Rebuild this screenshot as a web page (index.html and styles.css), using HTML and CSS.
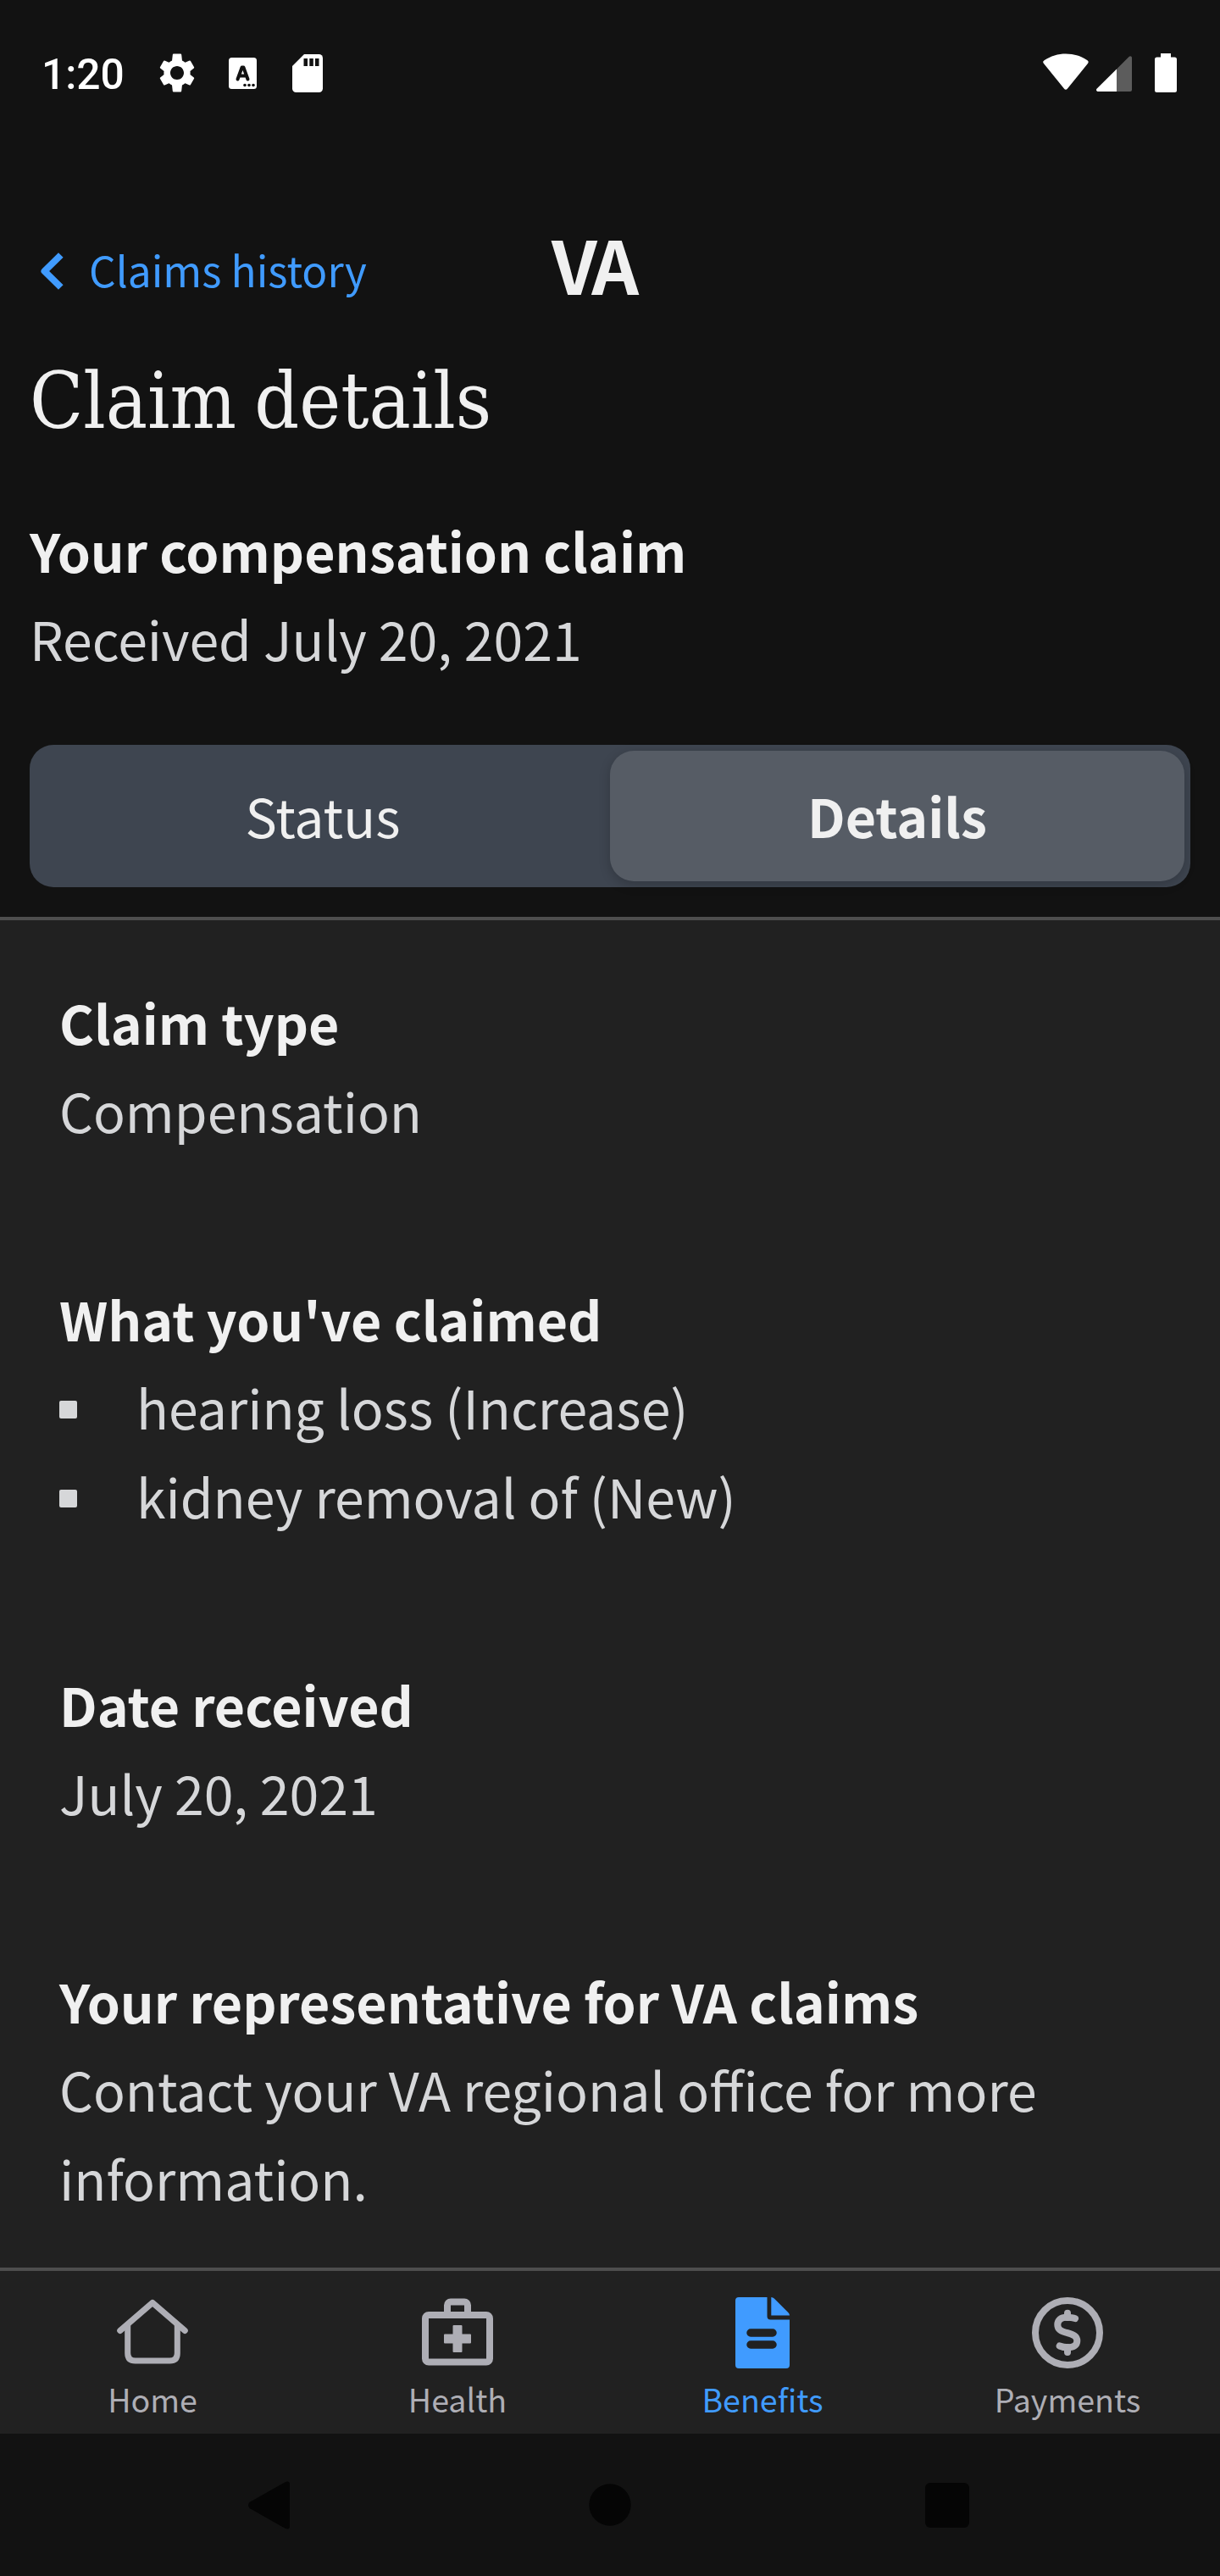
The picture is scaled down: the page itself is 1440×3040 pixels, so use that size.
FILE: index.html
```html
<!DOCTYPE html>
<html lang="en">
<head>
<meta charset="utf-8">
<title>Claim details</title>
<link rel="stylesheet" href="styles.css">
</head>
<body>
<div class="status-bar">
  <span class="clock">1:20</span>
  <svg class="st-gear" width="52" height="52" viewBox="0 0 24 24"><path fill="#fff" d="M19.14 12.94c.04-.3.06-.61.06-.94 0-.32-.02-.64-.07-.94l2.03-1.58c.18-.14.23-.41.12-.61l-1.92-3.32c-.12-.22-.37-.29-.59-.22l-2.39.96c-.5-.38-1.03-.7-1.62-.94L14.4 2.05c-.04-.24-.24-.41-.48-.41h-3.84c-.24 0-.43.17-.47.41l-.36 3.3c-.59.24-1.13.57-1.62.94l-2.39-.96c-.22-.08-.47 0-.59.22L2.74 8.87c-.12.21-.08.47.12.61l2.03 1.58c-.05.3-.09.63-.09.94s.02.64.07.94l-2.03 1.58c-.18.14-.23.41-.12.61l1.92 3.32c.12.22.37.29.59.22l2.39-.96c.5.38 1.03.7 1.62.94l.36 3.3c.05.24.24.41.48.41h3.84c.24 0 .44-.17.47-.41l.36-3.3c.59-.24 1.13-.56 1.62-.94l2.39.96c.22.08.47 0 .59-.22l1.92-3.32c.12-.22.07-.47-.12-.61l-2.01-1.58zM12 15.7c-2.04 0-3.7-1.66-3.7-3.7s1.66-3.7 3.7-3.7 3.7 1.66 3.7 3.7-1.66 3.7-3.7 3.7z"/></svg>
  <svg class="st-lang" width="33" height="37" viewBox="0 0 33 37"><rect width="33" height="37" rx="3.500" fill="#fff"/><path d="M10.500 25.500 15.600 11.500h1.800l5.100 14M12.800 21.500h7.500" fill="none" stroke="#121212" stroke-width="4" stroke-linecap="round" stroke-linejoin="round"/><g fill="#121212"><circle cx="19" cy="32.500" r="1.800"/><circle cx="24" cy="32.500" r="1.800"/><circle cx="29" cy="32.500" r="1.800"/></g></svg>
  <svg class="st-sd" width="36" height="45" viewBox="0 0 36 45"><path fill="#fff" d="M14 0h17.500a4.500 4.500 0 0 1 4.500 4.500v36a4.500 4.500 0 0 1-4.500 4.500h-27A4.500 4.500 0 0 1 0 40.500V14z"/><path fill="#121212" d="M13.500 5H18v9h-4.500zM20.300 5h4.500v9h-4.500zM27 5h4.500v9H27z"/></svg>
  <svg class="st-wifi" width="54" height="44" viewBox="0 0 54 44"><path fill="#fff" d="M1 12C-.2 10.500-.2 9.300 1.500 8.200 16.500-2.200 37.500-2.200 52.500 8.200c1.500 1.100 1.500 2.300.4 3.800L29 41.500c-1.200 1.600-2.900 1.600-4.100 0z"/></svg>
  <svg class="st-signal" width="42" height="42" viewBox="0 0 42 42"><path fill="#5c5c5c" d="M24 15.500 38.500 1C40-.4 42 .4 42 2.500V40a2 2 0 0 1-2 2H24z"/><path fill="#fff" d="M24 15.500V42H2.500C0 42-.9 40 1 38.300z"/></svg>
  <svg class="st-batt" width="26" height="46" viewBox="0 0 26 46"><path fill="#fff" d="M7 0h12v4.500h4.500A2.500 2.500 0 0 1 26 7v36.500a2.500 2.500 0 0 1-2.500 2.500h-21A2.500 2.500 0 0 1 0 43.500V7a2.500 2.500 0 0 1 2.500-2.500H7z"/></svg>
</div>

<header class="app-header">
  <a class="back">
    <svg width="32" height="50" viewBox="0 0 32 50"><path d="M25.800 6 6.500 25l19.300 19" fill="none" stroke="#409bff" stroke-width="8" stroke-linejoin="round"/></svg>
    <span>Claims history</span>
  </a>
  <span class="logo">VA</span>
</header>

<section class="summary">
  <h1>Claim details</h1>
  <h2>Your compensation claim</h2>
  <p>Received July 20, 2021</p>
  <div class="segmented">
    <span class="segment">Status</span>
    <span class="segment selected">Details</span>
  </div>
</section>

<main class="details">
  <section>
    <h2>Claim type</h2>
    <p>Compensation</p>
  </section>
  <section>
    <h2>What you've claimed</h2>
    <ul>
      <li>hearing loss (Increase)</li>
      <li>kidney removal of (New)</li>
    </ul>
  </section>
  <section>
    <h2>Date received</h2>
    <p>July 20, 2021</p>
  </section>
  <section>
    <h2>Your representative for VA claims</h2>
    <p>Contact your VA regional office for more information.</p>
  </section>
</main>

<nav class="tab-bar">
  <a class="tab">
    <svg width="88" height="88" viewBox="0 0 88 88" fill="none" stroke="#aeaeb5" stroke-width="7"><path d="M5.700 42.500 44 9.500l38.300 33" stroke-linecap="round" stroke-linejoin="round"/><path d="M14.700 36v33q0 9 9 9h40.600q9 0 9-9V36"/></svg>
    <span>Home</span>
  </a>
  <a class="tab">
    <svg width="88" height="88" viewBox="0 0 88 88"><path d="M10 24h68a4 4 0 0 1 4 4v47.500a4 4 0 0 1-4 4H10a4 4 0 0 1-4-4V28a4 4 0 0 1 4-4zM32 24V12.500a4 4 0 0 1 4-4h16a4 4 0 0 1 4 4V24" fill="none" stroke="#aeaeb5" stroke-width="8"/><path fill="#aeaeb5" d="M39.500 36h9a1 1 0 0 1 1 1v9.500h9.500a1 1 0 0 1 1 1v9a1 1 0 0 1-1 1h-9.500V67a1 1 0 0 1-1 1h-9a1 1 0 0 1-1-1v-9.500H29a1 1 0 0 1-1-1v-9a1 1 0 0 1 1-1h9.500V37a1 1 0 0 1 1-1z"/></svg>
    <span>Health</span>
  </a>
  <a class="tab active">
    <svg width="88" height="88" viewBox="0 0 88 88"><path fill="#409bff" d="M16 3h33.500v22.500q0 4 4 4H76V83a4 4 0 0 1-4 4H16a4 4 0 0 1-4-4V7a4 4 0 0 1 4-4zM54.300 3q2 0 3.500 1.500l16.500 16.500q1.700 1.700 1.700 3.500H54.300z"/><path d="M30 45h26M30 59h26" stroke="#212121" stroke-width="9.500" stroke-linecap="round"/></svg>
    <span>Benefits</span>
  </a>
  <a class="tab">
    <svg width="88" height="88" viewBox="0 0 88 88" fill="none" stroke="#aeaeb5" stroke-width="8"><circle cx="44" cy="45" r="38"/><path d="M44 21.700V27M44 62v6" stroke-linecap="round"/><path d="M53 28.200C50 26.900 47 26.700 43 26.700C36 26.700 32.300 30 32.300 35.500C32.300 41 36 43 44 45.200C51 47.300 55.300 49 55.300 54.500C55.300 59.500 51 62.300 45 62.300C40 62.300 37.500 61.800 34.700 60.500" stroke-linecap="round"/></svg>
    <span>Payments</span>
  </a>
</nav>

<div class="system-nav">
  <svg width="49" height="57" viewBox="0 0 49 57"><path fill="#050505" d="M1.500 25 43 1.500Q49-1.500 49 4v49q0 5.500-6 2.500L1.500 32Q-1.500 28.500 1.500 25z"/></svg>
  <svg class="nav-home" width="50" height="50" viewBox="0 0 50 50"><circle cx="25" cy="25" r="24.700" fill="#050505"/></svg>
  <svg width="52" height="53" viewBox="0 0 52 53"><rect width="52" height="53" rx="6" fill="#050505"/></svg>
</div>
</body>
</html>
```
FILE: styles.css
```css
* { box-sizing: border-box; }

body {
  margin: 0;
  width: 1440px;
  height: 3040px;
  display: flex;
  flex-direction: column;
  background: #121212;
  color: #d6d7d9;
  font: 400 62.6px/105px "Noto Sans CJK JP", "Noto Sans", sans-serif;
}

h1, h2, p, ul { margin: 0; padding: 0; }
svg { display: block; flex: none; }

.status-bar {
  height: 248px;
  padding: 60px 51px 0 49px;
  display: flex;
  align-items: flex-start;
}
.clock {
  width: 134px;
  font: 500 49.7px/56px Roboto, sans-serif;
  color: #fff;
}
.st-lang { margin: 8px 0 0 35px; }
.st-sd { margin: 4px 0 0 42px; }
.st-wifi { margin: 3px 0 0 auto; }
.st-signal { margin: 6px 0 0 9px; }
.st-batt { margin: 3px 0 0 27px; }

.app-header {
  height: 138px;
  padding-left: 46px;
  display: grid;
  grid-template-columns: 605px auto 1fr;
  align-items: center;
}
.back {
  display: flex;
  align-items: center;
  gap: 27px;
  color: #409bff;
  font-size: 49.6px;
  line-height: 70px;
}
.back svg { margin-top: 6px; }
.logo {
  font-size: 87px;
  font-weight: 700;
  line-height: 100px;
  letter-spacing: -5px;
  color: #f0f0f0;
  margin-bottom: 15px;
}

.summary {
  height: 700px;
  padding: 38px 35px 0;
  border-bottom: 4px solid #4e4e4e;
}
h1 {
  margin-bottom: 72px;
  font: 400 92px/100px "DejaVu Serif Condensed", "DejaVu Serif", serif;
  word-spacing: -5px;
  color: #f0f0f0;
}
h2 {
  margin-bottom: -1px;
  font-size: inherit;
  font-weight: 700;
  color: #f0f0f0;
}

.segmented {
  height: 168px;
  margin-top: 74px;
  padding: 7px;
  display: grid;
  grid-template-columns: 678px 678px;
  border-radius: 28px;
  background: #3e4550;
}
.segment {
  height: 154px;
  border-radius: 28px;
  color: #f0f0f0;
  line-height: 151px;
  text-align: center;
}
.selected {
  background: #565c65;
  font-weight: 700;
  box-shadow: 0 4px 14px rgba(0, 0, 0, .2);
}

.details {
  height: 1590px;
  padding: 67px 70px 0;
  display: flex;
  flex-direction: column;
  gap: 141px;
  background: #212121;
}
li {
  display: flex;
  align-items: center;
  gap: 70px;
}
li::before {
  content: "";
  width: 21px;
  height: 21px;
  margin-top: 8px;
  border-radius: 2px;
  background: #d6d7d9;
}

.tab-bar {
  height: 196px;
  padding-top: 28px;
  display: grid;
  grid-template-columns: repeat(4, 1fr);
  border-top: 4px solid #4e4e4e;
  background: #212121;
}
.tab {
  display: flex;
  flex-direction: column;
  align-items: center;
  color: #aeaeb5;
  font-size: 37.6px;
  line-height: 56px;
  gap: 7px;
}
.active { color: #409bff; }

.system-nav {
  height: 168px;
  padding: 0 296px 0 293px;
  display: flex;
  align-items: center;
  justify-content: space-between;
}
.nav-home { margin-left: 6px; }
```
